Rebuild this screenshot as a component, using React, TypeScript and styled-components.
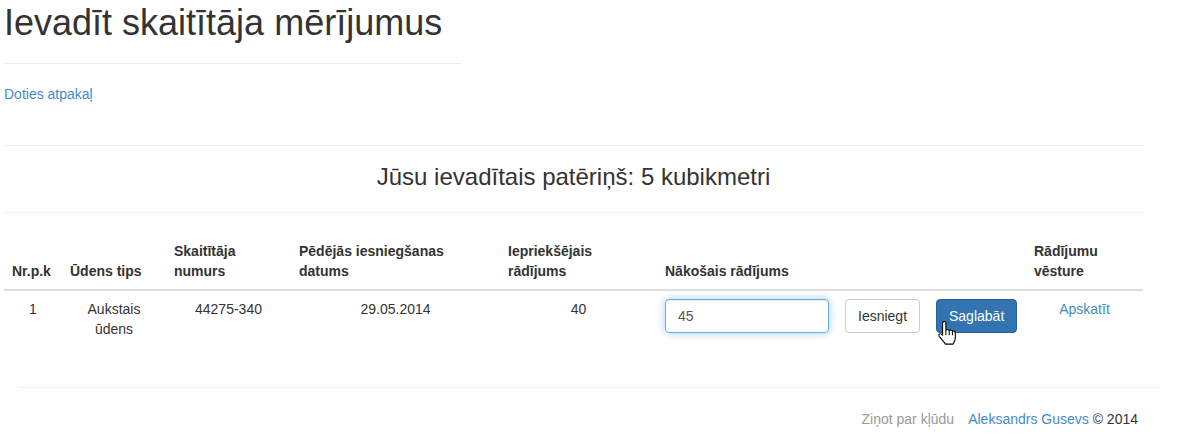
import React from "react";
import styled, { createGlobalStyle } from "styled-components";

const GlobalStyle = createGlobalStyle`
  html, body { margin: 0; padding: 0; background: #fff; }
  body {
    font-family: "Liberation Sans", Arial, Helvetica, sans-serif;
    font-size: 14px;
    line-height: 1.42857143;
    color: #333;
  }
  * { box-sizing: border-box; }
`;

const Page = styled.div`
  padding-left: 4px;
  padding-top: 3px;
  width: 1181px;
`;

const Main = styled.div`
  width: 1139px;
`;

const Title = styled.h1`
  margin: 0;
  font-size: 36px;
  font-weight: 400;
  line-height: 1.1;
  color: #333;
`;

const Rule = styled.hr<{ $width?: number; $top?: number; $bottom?: number }>`
  border: 0;
  border-top: 1px solid #eee;
  margin: ${(p) => p.$top ?? 20}px 0 ${(p) => p.$bottom ?? 20}px 0;
  width: ${(p) => (p.$width ? `${p.$width}px` : "100%")};
  height: 0;
`;

const Link = styled.a`
  color: #428bca;
  text-decoration: none;
  cursor: pointer;
`;

const BackRow = styled.div`
  line-height: 20px;
`;

const Summary = styled.h3`
  margin: 18px 0 0 0;
  font-size: 24px;
  font-weight: 400;
  line-height: 1.1;
  text-align: center;
  color: #333;
`;

const Table = styled.table`
  width: 1139px;
  border-collapse: collapse;
  border-spacing: 0;
  table-layout: fixed;
  margin-top: 20px;
`;

const Th = styled.th`
  padding: 8px;
  text-align: left;
  vertical-align: bottom;
  font-weight: 700;
  border-bottom: 2px solid #ddd;
  line-height: 20px;
`;

const Td = styled.td<{ $align?: string }>`
  padding: 8px;
  vertical-align: top;
  line-height: 20px;
  text-align: ${(p) => p.$align ?? "left"};
`;

const Input = styled.input`
  display: block;
  width: 164px;
  height: 34px;
  padding: 6px 12px;
  font-family: inherit;
  font-size: 14px;
  color: #555;
  background: #fff;
  border: 1px solid #66afe9;
  border-radius: 4px;
  outline: 0;
  box-shadow: inset 0 1px 1px rgba(0, 0, 0, 0.075), 0 0 8px rgba(102, 175, 233, 0.6);
`;

const Button = styled.button<{ $primary?: boolean }>`
  position: relative;
  display: inline-block;
  height: 34px;
  padding: 6px 12px;
  font-family: inherit;
  font-size: 14px;
  line-height: 20px;
  border-radius: 4px;
  cursor: pointer;
  color: ${(p) => (p.$primary ? "#fff" : "#333")};
  background: ${(p) => (p.$primary ? "#3174b1" : "#fff")};
  border: 1px solid ${(p) => (p.$primary ? "#2a6196" : "#ccc")};
`;

const Cursor = styled.svg`
  position: absolute;
  left: 0px;
  top: 20px;
  pointer-events: none;
`;

const Footer = styled.footer`
  margin-top: 40px;
  margin-left: 15px;
  width: 1140px;
`;

const FooterText = styled.p`
  margin: 0;
  padding-right: 21px;
  text-align: right;
  line-height: 20px;
`;

const Muted = styled.span`
  color: #999;
  margin-right: 14px;
`;

const HandCursor = () => (
  <Cursor width="20" height="26" viewBox="0 0 18 23">
    <path
      d="M5.5 1.5 C6.3 0.6 8 1 8 2.5 V9 C8.5 8 10.5 8 11 9.5 C11.5 8.5 13.5 8.5 14 10 C14.5 9.5 16.5 9.6 16.5 11.5 V16 C16.5 18.5 15 20 14.5 21.5 H7.5 C6.5 19.5 4.5 17.5 2 14.5 C1 13 2.5 11.5 4 12.5 L5 13.5 V2.5 Z"
      fill="#fff"
      stroke="#000"
      strokeWidth="1"
      strokeLinejoin="round"
    />
    <path d="M8 9 V13.5 M11 9.5 V13.5 M14 10 V13.5" stroke="#000" strokeWidth="0.9" fill="none" />
  </Cursor>
);

const colWidths = [58, 104, 125, 209, 157, 180, 91, 98, 117];

export default function App() {
  return (
    <>
      <GlobalStyle />
      <Page>
        <Main>
          <Title>Ievadīt skaitītāja mērījumus</Title>
          <Rule $width={458} />
          <BackRow>
            <Link>Doties atpakaļ</Link>
          </BackRow>
          <Rule $top={41} $bottom={0} />
          <Summary>Jūsu ievadītais patēriņš: 5 kubikmetri</Summary>
          <Rule $top={22} $bottom={0} />
          <Table>
            <colgroup>
              {colWidths.map((w, i) => (
                <col key={i} style={{ width: w }} />
              ))}
            </colgroup>
            <thead>
              <tr>
                <Th>Nr.p.k</Th>
                <Th>Ūdens tips</Th>
                <Th>Skaitītāja numurs</Th>
                <Th>Pēdējās iesniegšanas datums</Th>
                <Th>Iepriekšējais rādījums</Th>
                <Th>Nākošais rādījums</Th>
                <Th></Th>
                <Th></Th>
                <Th>Rādījumu vēsture</Th>
              </tr>
            </thead>
            <tbody>
              <tr>
                <Td $align="center">1</Td>
                <Td $align="center">Aukstais ūdens</Td>
                <Td $align="center">44275-340</Td>
                <Td $align="center">29.05.2014</Td>
                <Td $align="center">40</Td>
                <Td>
                  <Input defaultValue="45" />
                </Td>
                <Td>
                  <Button>Iesniegt</Button>
                </Td>
                <Td>
                  <Button $primary>
                    Saglabāt
                    <HandCursor />
                  </Button>
                </Td>
                <Td $align="center">
                  <Link>Apskatīt</Link>
                </Td>
              </tr>
            </tbody>
          </Table>
        </Main>
        <Footer>
          <Rule $top={0} $bottom={21} />
          <FooterText>
            <Muted>Ziņot par kļūdu</Muted>
            <Link>Aleksandrs Gusevs</Link> © 2014
          </FooterText>
        </Footer>
      </Page>
    </>
  );
}
